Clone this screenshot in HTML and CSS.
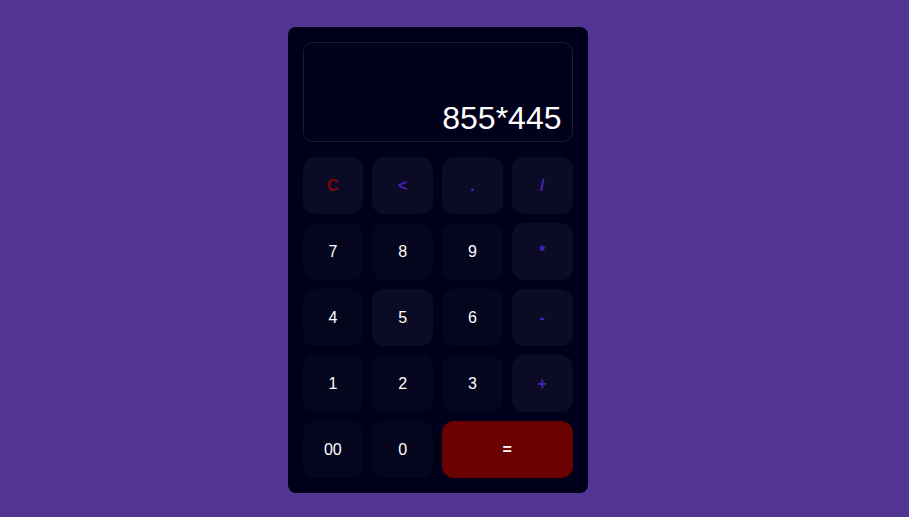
FILE: index.html
```html
<!doctype html>
<html lang="en">
    <head>
        <meta charset="UTF-8" />
        <meta name="viewport" content="width=device-width, initial-scale=1.0" />
        <title>Calculator</title>
        <link rel="stylesheet" href="styles.css">
    </head>
    <body>
        <div class="calculator">
            <div class="display" id="display">855*445</div>
            <div class="keys">
                <button class="key clear">C</button>
                <button class="key op">&lt;</button>
                <button class="key op">.</button>
                <button class="key op">/</button>
                <button class="key">7</button>
                <button class="key">8</button>
                <button class="key">9</button>
                <button class="key op">*</button>
                <button class="key">4</button>
                <button class="key hover">5</button>
                <button class="key">6</button>
                <button class="key op">-</button>
                <button class="key">1</button>
                <button class="key">2</button>
                <button class="key">3</button>
                <button class="key op">+</button>
                <button class="key">00</button>
                <button class="key">0</button>
                <button class="key equals">=</button>
            </div>
        </div>
    </body>
</html>
```
FILE: styles.css
```css
body {
    margin: 0;
    height: 100vh;
    background-color: #533595;
    font-family: "Liberation Sans", Arial, sans-serif;
    display: flex;
    justify-content: center;
    align-items: center;
    padding: 2px 34px 0 0;
    box-sizing: border-box;
}
.calculator {
    width: 300px;
    box-sizing: border-box;
    padding: 15px;
    background: #01001a;
    border-radius: 8px;
    display: flex;
    flex-direction: column;
    gap: 15px;
}
.display {
    height: 100px;
    box-sizing: border-box;
    border: 1px solid #1d1c35;
    border-radius: 10px;
    padding: 10px 10px 4px;
    color: #fff;
    font-size: 32px;
    display: flex;
    justify-content: flex-end;
    align-items: flex-end;
}
.keys {
    display: grid;
    grid-template-columns: repeat(4, 1fr);
    grid-auto-rows: 57px;
    gap: 9px;
}
.key {
    border: none;
    border-radius: 12px;
    background: #06051e;
    color: #fff;
    font-family: inherit;
    font-size: 16px;
    padding-top: 3px;
    cursor: pointer;
}
.key.op,
.key.hover {
    background: #0c0b26;
}
.key.op {
    color: #4c20bb;
    font-weight: bold;
}
.key.clear {
    background: #0c0b26;
    color: #780707;
    font-weight: bold;
}
.key.equals {
    grid-column: span 2;
    background: #6a0000;
    font-weight: bold;
}
```
